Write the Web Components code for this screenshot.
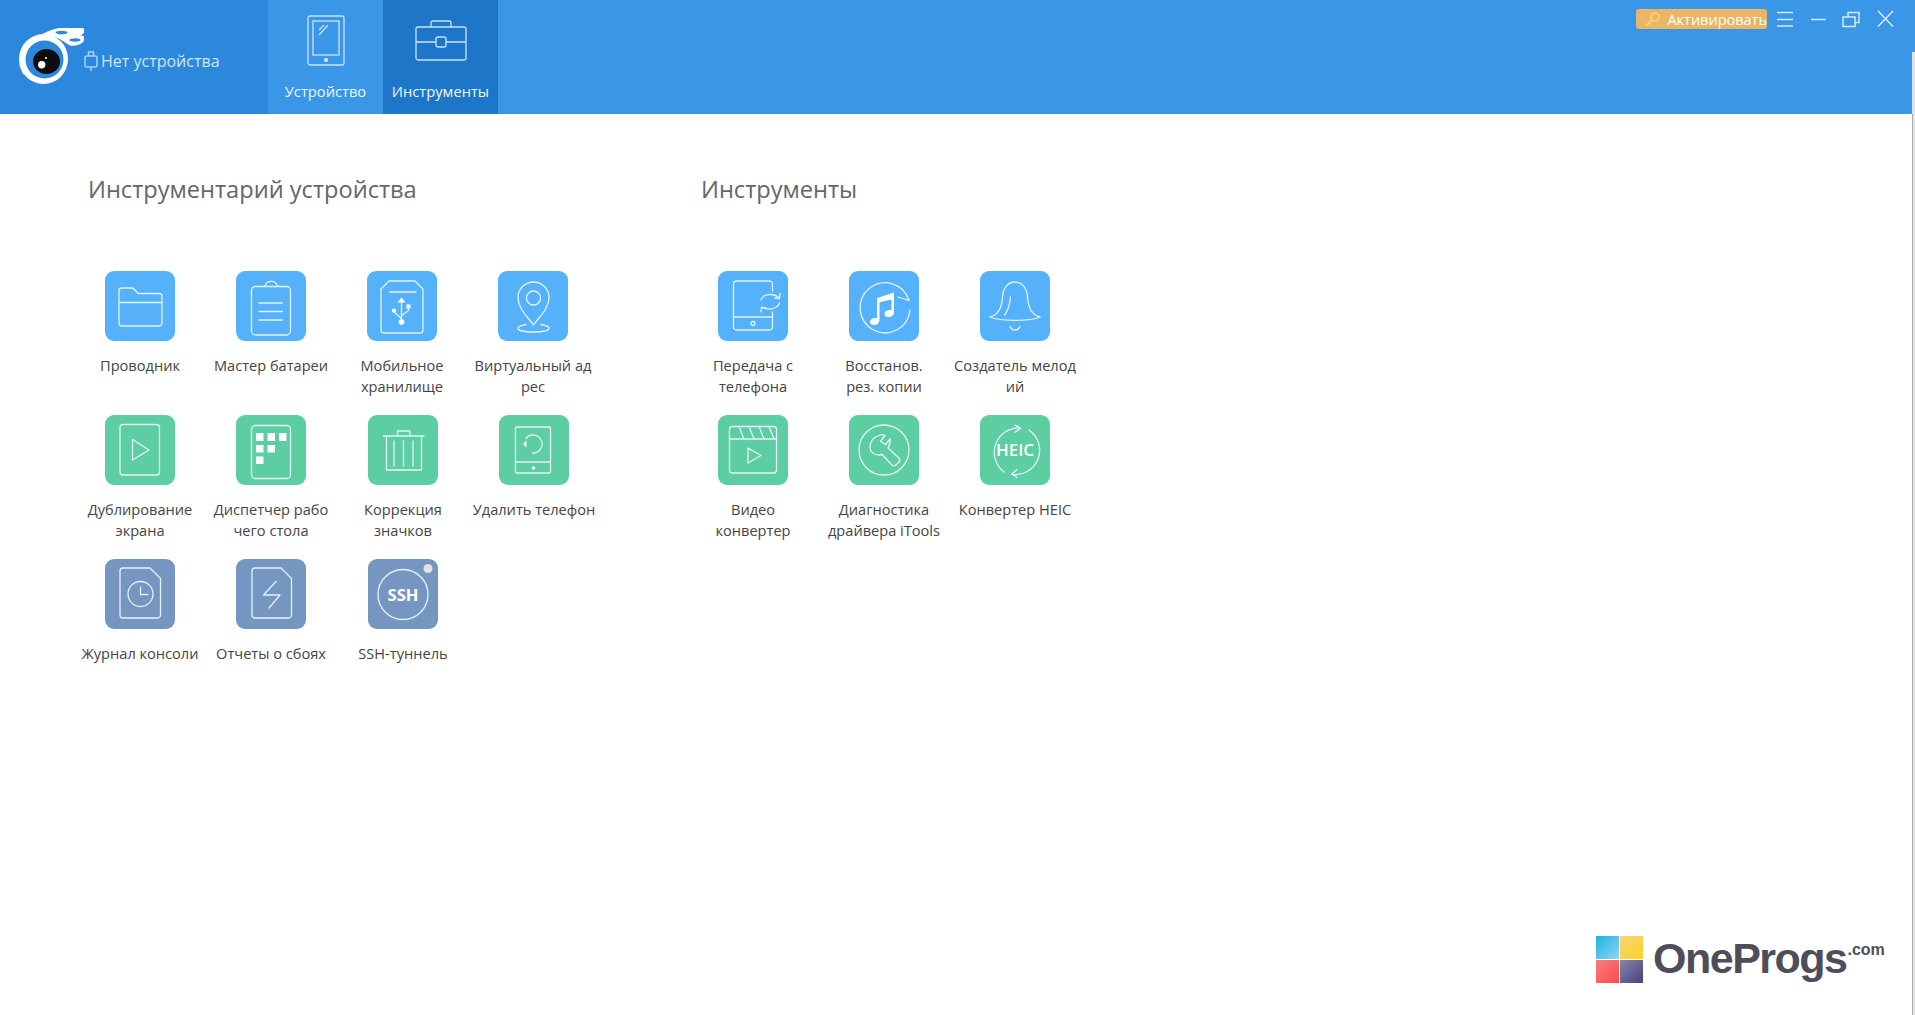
<!DOCTYPE html>
<html lang="ru"><head><meta charset="utf-8"><title>iTools</title>
<style>
html,body{margin:0;height:100%;overflow:hidden;background:#fff}
body{font-family:"Open Sans","Noto Sans",sans-serif}
</style></head>
<body>
<itools-app>
  <top-bar>
    <nav-tab icon="tablet">Устройство</nav-tab>
    <nav-tab icon="toolbox" active>Инструменты</nav-tab>
  </top-bar>
  <tool-section heading="Инструментарий устройства">
    <tool-item icon="folder" tone="blue">Проводник</tool-item>
    <tool-item icon="clipboard" tone="blue">Мастер батареи</tool-item>
    <tool-item icon="usb" tone="blue">Мобильное<br>хранилище</tool-item>
    <tool-item icon="pin" tone="blue">Виртуальный ад<br>рес</tool-item>
    <tool-item icon="mirror" tone="green">Дублирование<br>экрана</tool-item>
    <tool-item icon="desktop" tone="green">Диспетчер рабо<br>чего стола</tool-item>
    <tool-item icon="trash" tone="green" nudge>Коррекция<br>значков</tool-item>
    <tool-item icon="wipe" tone="green" nudge>Удалить телефон</tool-item>
    <tool-item icon="log" tone="slate">Журнал консоли</tool-item>
    <tool-item icon="crash" tone="slate">Отчеты о сбоях</tool-item>
    <tool-item icon="ssh" tone="slate" nudge>SSH-туннель</tool-item>
  </tool-section>
  <tool-section heading="Инструменты">
    <tool-item icon="transfer" tone="blue">Передача с<br>телефона</tool-item>
    <tool-item icon="music" tone="blue">Восстанов.<br>рез. копии</tool-item>
    <tool-item icon="bell" tone="blue">Создатель мелод<br>ий</tool-item>
    <tool-item icon="video" tone="green" style="grid-column:1">Видео<br>конвертер</tool-item>
    <tool-item icon="wrench" tone="green">Диагностика<br>драйвера iTools</tool-item>
    <tool-item icon="heic" tone="green">Конвертер HEIC</tool-item>
  </tool-section>
  <brand-mark></brand-mark>
</itools-app>
<script>
const ICONS={
folder:'<path d="M14 31V20a3 3 0 0 1 3-3h9c2 0 3 .6 4 2l3 3.500h21a3 3 0 0 1 3 3V52a3 3 0 0 1-3 3H17a3 3 0 0 1-3-3zM14 31.500h43"/>',
clipboard:'<rect x="15.500" y="15.500" width="39" height="48.500" rx="4"/><path d="M29 15a6.500 6.500 0 0 1 12.500 0M23 32h23.500M23 40.500h23.500M23 49h23.500"/>',
usb:'<path d="M22 10h26l8 8v41a3 3 0 0 1-3 3H17a3 3 0 0 1-3-3V18zM22.500 21H49M34.500 31v19"/><path class="f" d="M34.500 26.500l4 5h-8zM34.500 48a3 3 0 1 1-.01 0zM27 37.500a2.200 2.200 0 1 1-.01 0zM39.500 33.500h4v4h-4z"/><path d="M27 41l7 6M41.500 36v3.500l-7 5"/>',
pin:'<path d="M35.500 54C30 46 20 38 20 26.500a15.500 15.500 0 0 1 31 0C51 38 41 46 35.500 54z"/><circle cx="35.500" cy="27" r="7"/><path d="M28 53.500C23 54.500 20 55.500 20 57.200c0 2.300 7 3.800 15.500 3.800S51 59.500 51 57.200c0-1.700-3-2.700-8-3.700"/>',
mirror:'<rect x="15" y="9.500" width="39.500" height="50.500" rx="3"/><path d="M27.500 24.500v20.500L44 35z"/>',
desktop:'<rect x="15.500" y="10.500" width="39" height="53" rx="4"/><path class="f" d="M20 18h7.500v8H20zM31.500 18H39v8h-7.500zM43 18h7.500v8H43zM20 30h7.500v7.500H20zM31.500 30H39v7.500h-7.500zM20 41.500h7.500v7.500H20z"/>',
trash:'<path d="M15.500 21H56M18.500 21v34h35V21M29.500 21v-5h12.500v5M26 26v25M35.500 26v25M45 26v25"/>',
wipe:'<rect x="16.500" y="12" width="35" height="46" rx="1.500"/><path d="M16.500 47h35M27 23.500a9 9 0 1 1 6.500 14.500"/><path class="f" d="M24 29l3.500-3.500v7z"/><circle class="f" cx="34.500" cy="53" r="1.800"/>',
log:'<path d="M18 9h27l10.500 10.500V56a3 3 0 0 1-3 3H18a3 3 0 0 1-3-3V12a3 3 0 0 1 3-3z"/><circle cx="35.500" cy="35" r="12.500"/><path d="M35.500 28v7.500H43"/>',
crash:'<path d="M19 9h26l10.500 10.500V56a3 3 0 0 1-3 3H19a3 3 0 0 1-3-3V12a3 3 0 0 1 3-3z"/><path d="M40 22.500L27.500 36H44L33 49"/>',
ssh:'<circle cx="35" cy="35.500" r="25"/><text x="35" y="41.500" text-anchor="middle" font-size="16.500" font-weight="700">SSH</text><circle class="dot" cx="60" cy="9.500" r="4.500"/>',
transfer:'<path d="M54.500 20v-7a3 3 0 0 0-3-3H18.500a3 3 0 0 0-3 3v43a3 3 0 0 0 3 3h33a3 3 0 0 0 3-3V41M15.500 46h39"/><circle cx="35" cy="52.500" r="2"/><path d="M43 29c1-3.500 5-5.500 9-5.500 4 0 7.500 1.500 9.500 4M61.500 32c-1 3.500-5 6-9.500 6-4 0-6.500-.8-8.500-1.500M61.500 27.500l.5-5M61.500 27.500l-4.500-.5M43.500 36.500l-.5 4.500M43.500 36.500l4.500.5"/>',
music:'<path d="M60 29.500A25 25 0 1 0 61 39M49 26l11 3.500"/><path class="f" d="M28 27L45 21.500v19.500c0 3-2.500 5-5.500 5-2.500 0-4-1.200-4-3 0-2.500 2.700-4 5.200-4 .7 0 1.300 0 1.800.2V28.500l-12 2.800V49c0 3-2.500 5-5.500 5-2.500 0-4-1.200-4-3 0-2.500 2.700-4 5.200-4 .7 0 1.300 0 1.800.2z"/>',
bell:'<path d="M10 46C18 44 22 36 22.500 26 23 17 28 11 35 11s12 6 12.500 15C48 36 52 44 60 46M10 46C20 50.500 50 50.500 60 46M30.500 26c-.5 7-2 13-6 18M30 55.500c1 2.500 3 3.500 5 3.500s4-1 5-3.500"/>',
video:'<rect x="11.500" y="11.500" width="47" height="46.500" rx="3"/><path d="M11.500 24h47M21 11.500l5 12.500M31 11.500l5 12.500M41 11.500l5 12.500M51 11.500l5 12.500M30 33v15l13-7.500z"/>',
wrench:'<circle cx="35" cy="35" r="25"/><path d="M31 20C25 22 21 26 21 32c0 5 4 8 9 8l3-.5L43 50c1.500 1 3 1 4 0l3-3c1-1 1-2.500 0-4L39 33c2-3 2.500-6 2-9l-4.500 5.500-5-3L36 20.500c-2-1-3.500-1-5-.5z"/>',
heic:'<path d="M40 13A24.500 24.500 0 0 0 24 57M49 15A24.500 24.500 0 0 1 32 59.500M35 10l5.700 3.300L35 17.300M36.700 55l-5 4 5 3.300"/><text x="35" y="41" text-anchor="middle" font-size="17" font-weight="600">HEIC</text>'
};
const def=(n,html,extra={})=>customElements.define(n,class extends HTMLElement{
  constructor(){super();this.attachShadow({mode:'open'}).innerHTML=typeof html==='function'?html(this):html}
  connectedCallback(){extra.connected&&extra.connected(this)}
});
def('itools-app',`<style>
:host{display:block;height:1015px;position:relative;box-sizing:border-box;padding-right:3px;background:linear-gradient(#3a96e6,#3a96e6) right top/3px 52px no-repeat,linear-gradient(#ababab,#ababab) 1912px 114px/1px 100% no-repeat,linear-gradient(#e2e2e2,#e2e2e2) right top/3px 100% no-repeat,#fff}
main{display:flex;padding:59px 0 0 74.500px}
</style><slot name="bar"></slot><main><slot></slot></main><slot name="mark"></slot>`,{connected(h){
  const b=h.querySelector('top-bar'),m=h.querySelector('brand-mark');b.slot='bar';m.slot='mark';
}});
def('top-bar',`<style>
:host{display:flex;height:114px;background:#3a96e6;color:#fff}
.brand{width:268px;background:#2b88dc;display:flex;align-items:center;box-sizing:border-box;padding:8px 0 0 16px;flex:none}
.brand svg.logo{flex:none;margin-top:-6px}
.plug{flex:none;margin:0 3px 0 0}
.name{font-size:16px;color:#d2e6f9;white-space:nowrap;line-height:20px}
.tabs{display:flex}
.end{margin-left:auto;display:flex;align-items:flex-start;padding:9px 18px 0 0}
.act{height:20px;width:131px;box-sizing:border-box;background:#ebb566;border-radius:3px;display:flex;align-items:center;padding-left:8px;gap:7px;font-size:14.500px;white-space:nowrap;color:#fff}
.win{display:flex;align-items:center;fill:none;stroke:#d6eafb;stroke-width:1.500}
.win svg{display:block}
</style>
<div class="brand">
<svg class="logo" width="68" height="60" viewBox="16 26 68 60">
 <path fill="#fff" d="M33 39C41 31 52 27 60 26c8-1 20-1.500 25 1 0 3-2 6-5 6.500 4 0 6 2 5 4-3 5-10 7-15 6-4-2-8-6-14-8-7-1-15 0-21 6z"/>
 <ellipse cx="61.500" cy="30.500" rx="6" ry="1.700" fill="#2b88dc"/><ellipse cx="75" cy="38" rx="5.500" ry="1.700" fill="#2b88dc"/>
 <ellipse cx="43.500" cy="57" rx="24.500" ry="25" fill="#fff"/><path fill="#fff" d="M19 62l4 10 5 1z"/>
 <circle cx="44.500" cy="57.500" r="19" fill="#2b88dc"/>
 <ellipse cx="46.500" cy="59.500" rx="13.500" ry="12.500" fill="#0d0d0d"/>
 <circle cx="41.700" cy="62.700" r="3.700" fill="#fff"/><circle cx="46" cy="56" r="1" fill="#fff"/>
</svg>
<svg class="plug" width="14" height="20" viewBox="0 0 14 20" fill="none" stroke="#a9d1f4" stroke-width="1.500"><rect x="1" y="5" width="12" height="11" rx="2"/><path d="M4.500 5V1h5v4M7 16v4"/></svg>
<span class="name">Нет устройства</span></div>
<div class="tabs"><slot></slot></div>
<div class="end"><span class="act"><svg width="18" height="17" viewBox="0 0 18 17" fill="none" stroke="#f8dc7c" stroke-width="1.500"><circle cx="12" cy="6" r="4.500"/><path d="M9 9l-7 6M5 12l2 2M3 14l1.500 1.500"/></svg>Активировать</span>
<div class="win"><svg width="127" height="20" viewBox="0 0 127 20"><path d="M10 3.500h16M10 10.500h16M10 17h16M44 10.500h15M81 8V3.500h11v10h-4M76 8h12v9.500H76z"/><path d="M111 2l15 15.500M126 2l-15 15.500"/></svg></div></div>`);
def('nav-tab',h=>{
 const a=h.hasAttribute('active');
 const ic=h.getAttribute('icon')==='tablet'
 ?`<svg width="38" height="52" viewBox="0 0 38 52"><rect x="1" y="1" width="36" height="49" rx="2"/><rect x="6" y="6" width="26" height="34"/><path d="M12 15l5-5M12 20l9-10"/><circle cx="19" cy="45" r="1.500" fill="#d6e9fa"/></svg>`
 :`<svg width="52" height="42" viewBox="0 0 52 42"><path d="M16 7V2.500a1.500 1.500 0 0 1 1.500-1.500h17A1.500 1.500 0 0 1 36 2.500V7"/><rect x="1" y="7" width="50" height="33" rx="2"/><path d="M1 22h20M31 22h20"/><rect x="21" y="17" width="10" height="10" rx="2"/></svg>`;
 return `<style>
:host{display:flex;flex-direction:column;align-items:center;width:115px;height:114px;box-sizing:border-box;background:${a?'#1e76c8':'#3a96e6'};font-size:14.700px;color:#f0f6fc}
.i{height:68px;display:flex;align-items:flex-start;padding-top:${a?20:15}px;box-sizing:border-box;flex:none}
svg{fill:none;stroke:#cbe2f7;stroke-width:1.300;display:block}
.t{line-height:20px;margin-top:13px;white-space:nowrap}
</style><div class="i">${ic}</div><div class="t"><slot></slot></div>`});
def('tool-section',h=>`<style>
:host{display:block;width:613px;flex:none}
h2{margin:0 0 66px 13.500px;font:400 23.600px/32px "Open Sans","Noto Sans",sans-serif;color:#666;white-space:nowrap}
.g{display:grid;grid-template-columns:repeat(4,131px);grid-auto-rows:144px}
</style><h2>${h.getAttribute('heading')}</h2><div class="g"><slot></slot></div>`);
const TONES={blue:'#55b1fa',green:'#5ccea2',slate:'#7596c0'};
def('tool-item',h=>`<style>
:host{display:flex;flex-direction:column;align-items:center;font-size:14.600px;line-height:21px;color:#444;text-align:center;box-sizing:border-box;${h.hasAttribute('nudge')?'padding-left:2px;':''}}
.tile{width:70px;height:70px;border-radius:9px;background:${TONES[h.getAttribute('tone')]};flex:none;margin-bottom:13.500px}
svg{display:block;fill:none;stroke:#e4f2fe;stroke-width:1.300;stroke-linejoin:round;stroke-linecap:round}
.f{fill:#fff;stroke:none}.dot{fill:#e2e2e2;stroke:none}text{fill:#fff;stroke:none;font-family:"Open Sans",sans-serif}
.l{white-space:nowrap}
</style><div class="tile"><svg width="70" height="70" viewBox="0 0 70 70">${ICONS[h.getAttribute('icon')]}</svg></div><div class="l"><slot></slot></div>`);
def('brand-mark',`<style>
:host{position:absolute;left:1596px;top:936px;display:flex;gap:10px;align-items:flex-start;color:#4e4e5a;font-family:"Liberation Sans",sans-serif}
.q{display:grid;grid-template-columns:23px 23px;grid-auto-rows:23px;gap:1px;flex:none}
.q i{display:block}
.t{font-weight:700;font-size:43px;line-height:47px;letter-spacing:-1.500px;margin-top:-1px;display:flex;align-items:flex-start}
sup{font-size:16px;line-height:20px;font-weight:700;letter-spacing:0;margin:5px 0 0 1px;vertical-align:baseline}
</style><div class="q"><i style="background:linear-gradient(135deg,#1fb1e6,#8fd6ee)"></i><i style="background:linear-gradient(135deg,#f4d77a,#fdd21f)"></i><i style="background:linear-gradient(135deg,#f77e7e,#fb4a4a)"></i><i style="background:linear-gradient(135deg,#8a83a8,#47437f)"></i></div><div class="t">OneProgs<sup>.com</sup></div>`);
</script>
</body></html>
